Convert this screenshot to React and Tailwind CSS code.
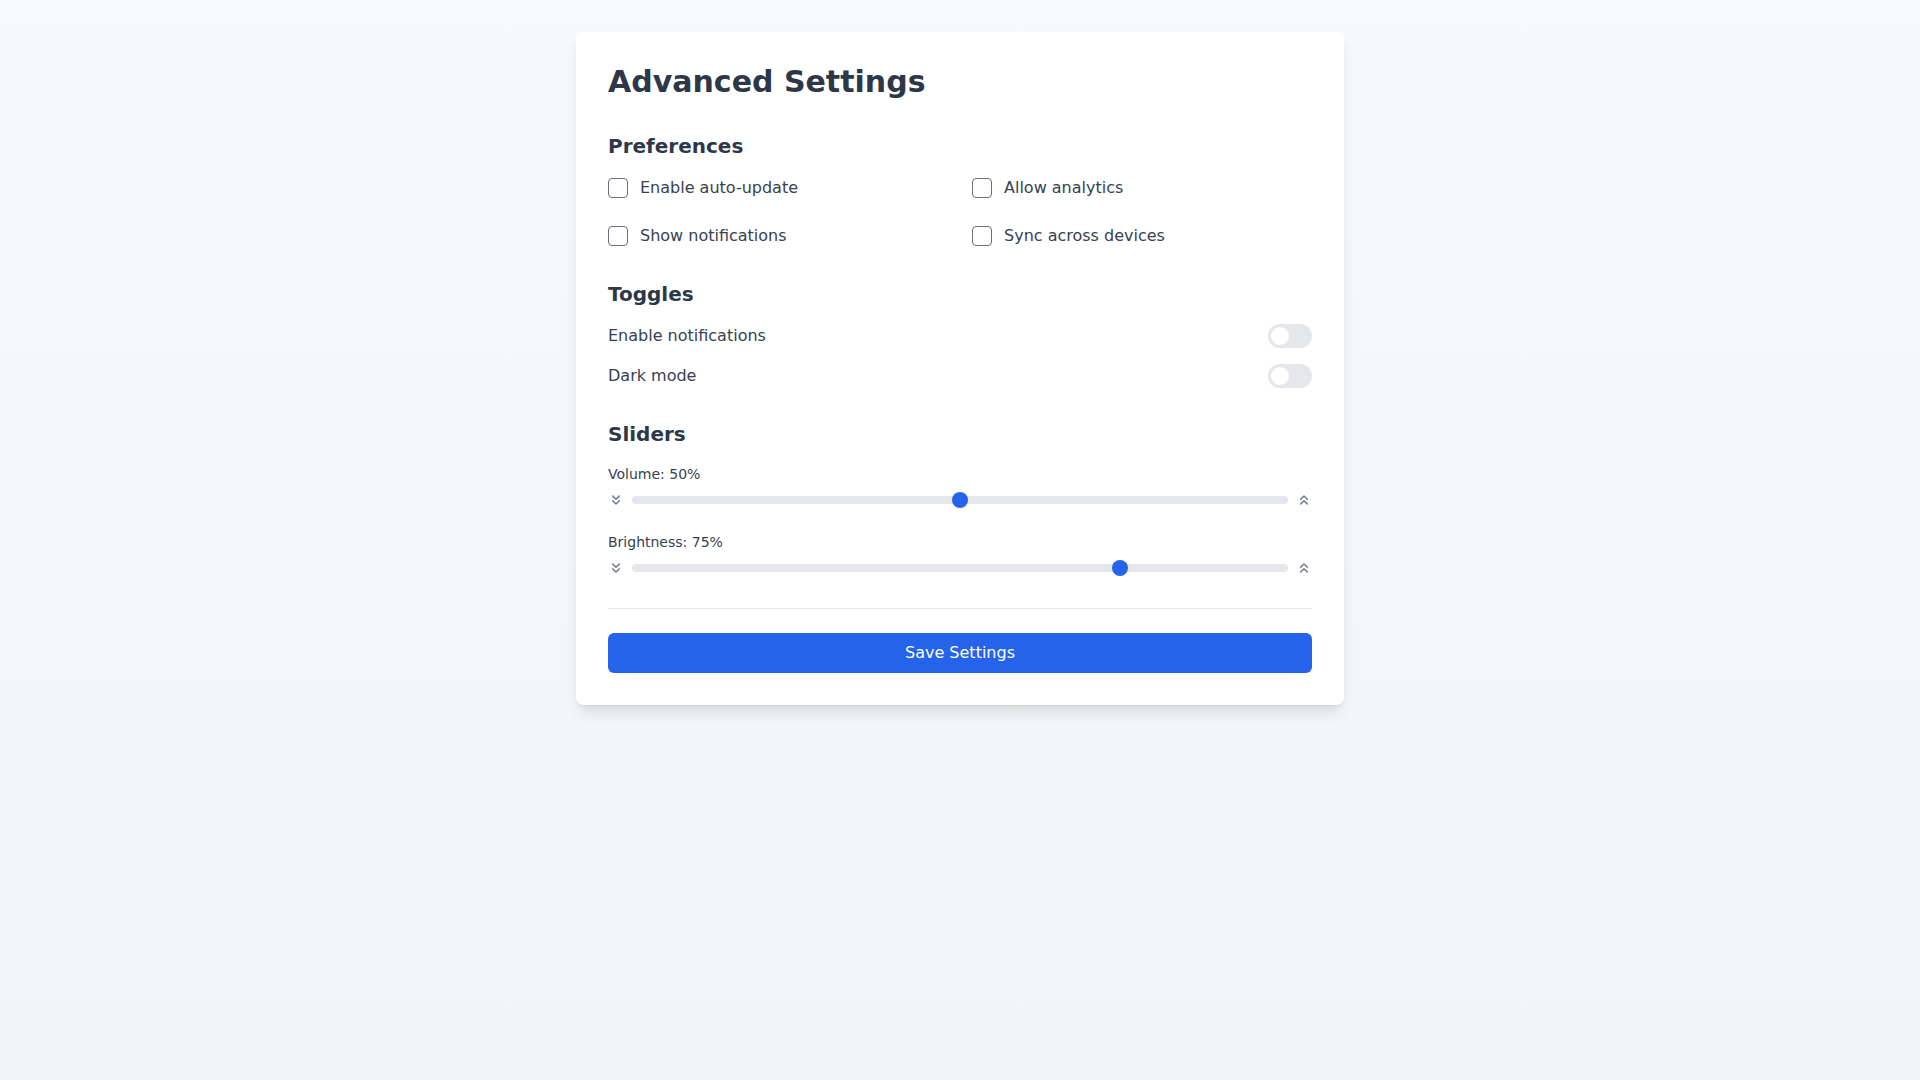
import React, { useState } from "react";
import { ChevronsDown, ChevronsUp } from "lucide-react";

const preferences = [
    { id: "autoUpdate", label: "Enable auto-update" },
    { id: "analytics", label: "Allow analytics" },
    { id: "notifications", label: "Show notifications" },
    { id: "sync", label: "Sync across devices" },
];

const Toggle = ({ checked, onChange }) => (
    <button
        type="button"
        onClick={() => onChange(!checked)}
        className={`relative h-6 w-11 shrink-0 rounded-full transition-colors ${
            checked ? "bg-[#2563eb]" : "bg-[#e5e7eb]"
        }`}
    >
        <span
            className={`absolute left-[3px] top-[3px] h-[18px] w-[18px] rounded-full bg-white transition-transform ${
                checked ? "translate-x-5" : ""
            }`}
        />
    </button>
);

const Slider = ({ label, value, onChange }) => (
    <div>
        <label className="mb-2 block text-sm text-[#374151]">
            {label}: {value}%
        </label>
        <div className="flex items-center gap-2">
            <ChevronsDown size={16} className="shrink-0 text-[#6b7280]" />
            <input
                type="range"
                min="0"
                max="100"
                value={value}
                onChange={(e) => onChange(Number(e.target.value))}
                className="h-2 w-full cursor-pointer appearance-none rounded-full bg-[#e5e7eb] [&::-webkit-slider-thumb]:h-4 [&::-webkit-slider-thumb]:w-4 [&::-webkit-slider-thumb]:appearance-none [&::-webkit-slider-thumb]:rounded-full [&::-webkit-slider-thumb]:bg-[#2563eb]"
            />
            <ChevronsUp size={16} className="shrink-0 text-[#6b7280]" />
        </div>
    </div>
);

export default function App() {
    const [checks, setChecks] = useState({});
    const [notify, setNotify] = useState(false);
    const [dark, setDark] = useState(false);
    const [volume, setVolume] = useState(50);
    const [brightness, setBrightness] = useState(75);

    return (
        <div className="min-h-screen bg-gradient-to-b from-[#f8f9fa] to-[#f3f4f6] pt-8 font-['DejaVu_Sans',sans-serif]">
            <div className="mx-auto max-w-3xl rounded-lg bg-white p-8 shadow-lg">
                <h1 className="mb-8 text-3xl font-bold text-[#2d3748]">Advanced Settings</h1>

                {/* Checkboxes */}
                <section className="mb-8">
                    <h2 className="mb-4 text-xl font-semibold text-[#2d3748]">Preferences</h2>
                    <div className="grid grid-cols-2 gap-6">
                        {preferences.map((item) => (
                            <label key={item.id} className="flex h-6 cursor-pointer items-center gap-3">
                                <input
                                    type="checkbox"
                                    checked={!!checks[item.id]}
                                    onChange={() => setChecks({ ...checks, [item.id]: !checks[item.id] })}
                                    className="h-5 w-5 appearance-none rounded border border-[#6b7280] bg-white checked:border-[#2563eb] checked:bg-[#2563eb]"
                                />
                                <span className="text-base text-[#374151]">{item.label}</span>
                            </label>
                        ))}
                    </div>
                </section>

                {/* Toggles */}
                <section className="mb-8">
                    <h2 className="mb-4 text-xl font-semibold text-[#2d3748]">Toggles</h2>
                    <div className="space-y-4">
                        <div className="flex h-6 items-center justify-between">
                            <span className="text-[#374151]">Enable notifications</span>
                            <Toggle checked={notify} onChange={setNotify} />
                        </div>
                        <div className="flex h-6 items-center justify-between">
                            <span className="text-[#374151]">Dark mode</span>
                            <Toggle checked={dark} onChange={setDark} />
                        </div>
                    </div>
                </section>

                {/* Sliders */}
                <section className="mb-8">
                    <h2 className="mb-4 text-xl font-semibold text-[#2d3748]">Sliders</h2>
                    <div className="space-y-6">
                        <Slider label="Volume" value={volume} onChange={setVolume} />
                        <Slider label="Brightness" value={brightness} onChange={setBrightness} />
                    </div>
                </section>

                <div className="border-t border-[#e5e7eb] pt-6">
                    <button className="w-full rounded-md bg-[#2563eb] py-2 text-base text-white">
                        Save Settings
                    </button>
                </div>
            </div>
        </div>
    );
}
